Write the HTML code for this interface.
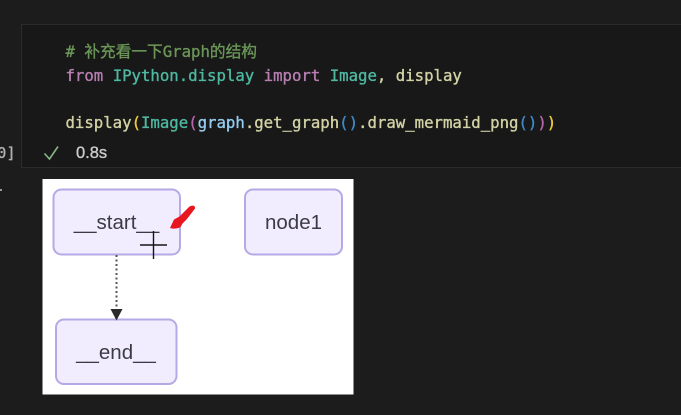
<!DOCTYPE html>
<html>
<head>
<meta charset="utf-8">
<style>
html,body{margin:0;padding:0;background:#1c1c1c;}
#r{position:relative;width:681px;height:415px;overflow:hidden;background:#1c1c1c;}
.cell{position:absolute;left:21px;top:24px;width:670px;height:144px;background:#181818;border:1px solid #2b2b2b;box-sizing:border-box;}
.l{position:absolute;left:65.500px;font:15.68px/24px "DejaVu Sans Mono","Noto Sans CJK SC",monospace;white-space:pre;color:#cfd0a8;filter:blur(.35px);-webkit-text-stroke:.35px currentColor;}
.c{color:#6b9658}.k{color:#b77fb2}.t{color:#4fb8a2}.v{color:#94cdf0}.f{color:#d3d3a6}.y{color:#eec83c}.m{color:#b865ac}.b{color:#3f88c8}
.n{position:absolute;left:0;top:0}
</style>
</head>
<body>
<div id="r">
<div class="cell"></div>
<div class="l c" style="top:40px"># 补充看一下Graph的结构</div>
<div class="l" style="top:63.500px"><span class="k">from</span> <span class="t">IPython.display</span> <span class="k">import</span> <span class="t">Image</span>, <span class="f">display</span></div>
<div class="l f" style="top:110.500px">display<span class="y">(</span><span class="t">Image</span><span class="m">(</span><span class="v">graph</span>.get_graph<span class="b">()</span>.draw_mermaid_png<span class="b">()</span><span class="m">)</span><span class="y">)</span></div>
<div style="position:absolute;left:-3px;top:143.500px;font:15.500px/18px 'DejaVu Sans Mono',monospace;color:#b0b0b0;filter:blur(.35px);-webkit-text-stroke:.35px currentColor">0]</div>
<div style="position:absolute;left:76px;top:144px;font:16.500px/18px 'Liberation Sans',sans-serif;color:#cdcdcd;filter:blur(.35px);-webkit-text-stroke:.35px currentColor">0.8s</div>
<svg class="n" width="681" height="415" viewBox="0 0 681 415" xmlns="http://www.w3.org/2000/svg">
<path d="M44.500 153.500L49.500 159L58 146.500" fill="none" stroke="#86b886" stroke-width="1.600"/>
<rect x="0" y="189" width="2" height="2" fill="#9a9a9a"/>
<rect x="42.500" y="179" width="311" height="215.500" fill="#ffffff"/>
<rect x="53.500" y="189.500" width="126.500" height="65" rx="8" fill="#f1edfe" stroke="#b5a9e6" stroke-width="2"/>
<rect x="245" y="189.500" width="97" height="65" rx="8" fill="#f1edfe" stroke="#b5a9e6" stroke-width="2"/>
<rect x="56" y="319.500" width="120.500" height="64.500" rx="8" fill="#f1edfe" stroke="#b5a9e6" stroke-width="2"/>
<g filter="url(#s)">
<text x="116.500" y="229" text-anchor="middle" font-family="Liberation Sans, sans-serif" font-size="20.500" fill="#3a3a44">__start__</text>
<text x="293.500" y="229" text-anchor="middle" font-family="Liberation Sans, sans-serif" font-size="20.500" fill="#3a3a44">node1</text>
<text x="116" y="359" text-anchor="middle" font-family="Liberation Sans, sans-serif" font-size="20.500" fill="#3a3a44">__end__</text>
</g>
<defs><filter id="s" x="-5%" y="-5%" width="110%" height="110%"><feGaussianBlur stdDeviation=".3"/></filter></defs>
<path d="M116.500 255V309" stroke="#555" stroke-width="2" stroke-dasharray="2 2.500" fill="none"/>
<path d="M110.500 309H122.500L116.500 320.500Z" fill="#2a2a2a"/>
<path d="M153.500 231V259M140 245H167" stroke="#161616" stroke-width="1.400" fill="none"/>
<path d="M170 228L174 219.500L179.500 216.500L189 207C191.500 205 195.500 205 195 208.500L187 219L182.500 223.500L180.500 227C177 229 173 229 170 228Z" fill="#e8161e"/>
</svg>
</div>
</body>
</html>
